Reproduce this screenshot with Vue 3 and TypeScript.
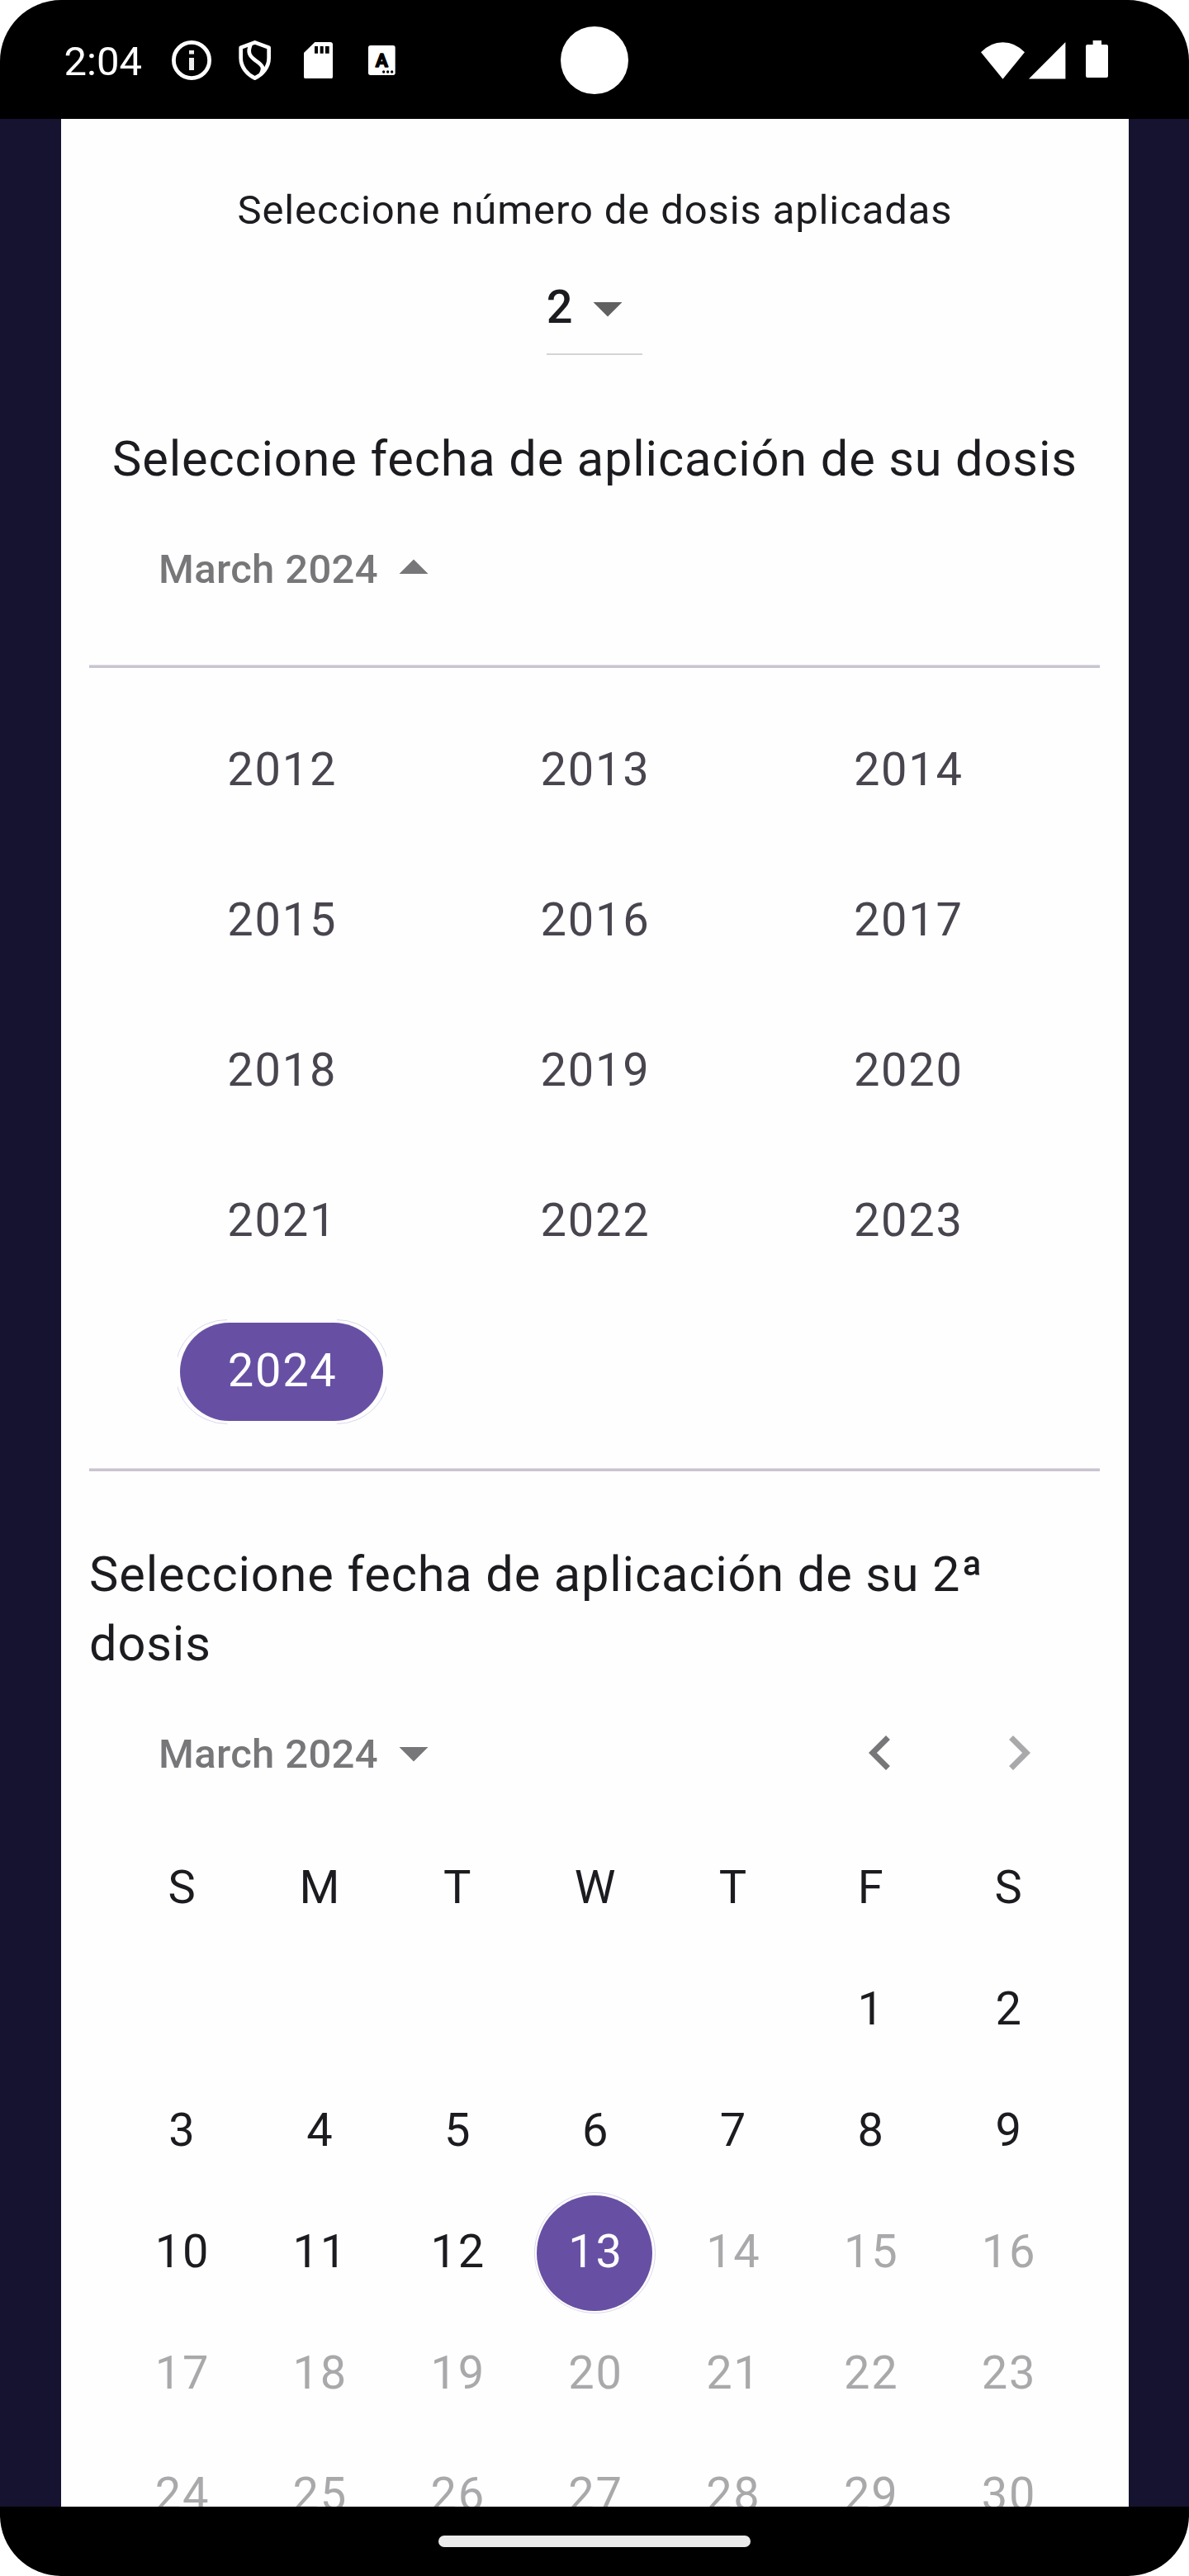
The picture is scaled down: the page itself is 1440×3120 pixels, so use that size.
<script setup lang="ts">
interface Day {
  label: string
  state: 'empty' | 'enabled' | 'selected' | 'disabled'
}

const years: number[] = Array.from({ length: 13 }, (_, i) => 2012 + i)
const selectedYear = 2024

const weekdays: string[] = ['S', 'M', 'T', 'W', 'T', 'F', 'S']

const firstWeekday = 5
const today = 13

const days: Day[] = [
  ...Array.from({ length: firstWeekday }, (): Day => ({ label: '', state: 'empty' })),
  ...Array.from({ length: 30 }, (_, i): Day => {
    const n = i + 1
    return {
      label: String(n),
      state: n === today ? 'selected' : n < today ? 'enabled' : 'disabled',
    }
  }),
]
</script>

<template>
  <div class="phone">
    <header class="status">
      <span class="clock">2:04</span>
      <svg class="info" viewBox="0 0 48 48">
        <circle cx="24" cy="24" r="21.6" fill="none" stroke="#fff" stroke-width="4.8" />
        <rect x="21" y="12" width="6" height="4.6" fill="#ececec" />
        <rect x="21" y="21" width="6" height="15" fill="#ececec" />
      </svg>
      <svg class="shield" viewBox="0 0 118 144" fill="none" stroke="#fff" stroke-width="14" stroke-linejoin="round">
        <path d="M59 7 L8 26 V64 C8 98 32 124 59 137 C86 124 110 98 110 64 V26 Z" />
        <path d="M44 14 C32 42 38 56 62 73 C88 90 94 100 80 124" />
      </svg>
      <svg class="sd" viewBox="0 0 105 134">
        <path d="M40 0 H96 Q105 0 105 9 V125 Q105 134 96 134 H9 Q0 134 0 125 V39 Z" fill="#fff" />
        <path d="M39 15h12v26H39zM59 15h12v26H59zM78 15h14v26H78z" fill="#000" />
      </svg>
      <svg class="abox" viewBox="0 0 98 108">
        <rect width="98" height="108" rx="8" fill="#fff" />
        <text x="49" y="77" text-anchor="middle" font-family="Roboto, sans-serif" font-weight="700" font-size="68" stroke="#000" stroke-width="4" stroke-linejoin="round">A</text>
        <circle cx="56" cy="96" r="5" />
        <circle cx="71" cy="96" r="5" />
        <circle cx="86" cy="96" r="5" />
      </svg>
      <span class="grow"></span>
      <svg class="wifi" viewBox="0 0 53 45">
        <path d="M26.5 44.7 L0 12.3 Q11.5 0.2 26.5 0.2 Q41.5 0.2 53 12.3 Z" fill="#fff" />
      </svg>
      <svg class="signal" viewBox="0 0 45 45">
        <path d="M0 44.6 L44.4 0 V44.6 Z" fill="#fff" />
      </svg>
      <svg class="battery" viewBox="0 0 27 45">
        <path d="M8.6 0 H19 V5 H25 Q27 5 27 7 V43 Q27 45 25 45 H2 Q0 45 0 43 V7 Q0 5 2 5 H8.6 Z" fill="#fff" />
      </svg>
      <span class="camera"></span>
    </header>

    <main class="body">
      <section class="sheet">
        <p class="label">Seleccione número de dosis aplicadas</p>
        <div class="select">
          <span class="value">2</span>
          <svg class="icon" viewBox="0 0 24 24"><path d="M7 10l5 5 5-5z" fill="#616161" /></svg>
        </div>

        <h2 class="title centered">Seleccione fecha de aplicación de su dosis</h2>
        <div class="month-bar">
          <span class="month">March 2024</span>
          <svg class="icon" viewBox="0 0 24 24"><path d="M7 14l5-5 5 5z" fill="#777679" /></svg>
        </div>
        <hr class="rule first" />
        <div class="years">
          <div v-for="y in years" :key="y" class="year">
            <span v-if="y === selectedYear" class="pill">
              {{ y }}
              <svg class="pill-ring" viewBox="0 0 253 127" fill="none" stroke="#dcd7ea" stroke-width="1">
                <path d="M60 .5 A63 63 0 0 0 60 126.5" />
                <path d="M193 .5 A63 63 0 0 1 193 126.5" />
              </svg>
            </span>
            <template v-else>{{ y }}</template>
          </div>
        </div>
        <hr class="rule second" />

        <h2 class="title">Seleccione fecha de aplicación de su 2ª dosis</h2>
        <div class="month-bar">
          <span class="month">March 2024</span>
          <svg class="icon" viewBox="0 0 24 24"><path d="M7 10l5 5 5-5z" fill="#777679" /></svg>
          <span class="grow"></span>
          <svg class="icon prev" viewBox="0 0 24 24">
            <path d="M15.41 7.41L14 6l-6 6 6 6 1.41-1.41L10.83 12z" fill="#777679" />
          </svg>
          <svg class="icon" viewBox="0 0 24 24">
            <path d="M10 6L8.59 7.41 13.17 12l-4.58 4.59L10 18l6-6z" fill="#a9a8aa" />
          </svg>
        </div>
        <div class="calendar">
          <div v-for="(w, i) in weekdays" :key="'w' + i" class="cell">{{ w }}</div>
          <div v-for="(d, i) in days" :key="i" class="cell" :class="d.state">
            <span v-if="d.state === 'selected'" class="dot">{{ d.label }}</span>
            <template v-else>{{ d.label }}</template>
          </div>
        </div>
      </section>
    </main>

    <footer class="nav"><span class="handle"></span></footer>
  </div>
</template>

<style>
body {
  background: #fff;
}
</style>

<style scoped>
.phone {
  box-sizing: border-box;
  width: 1440px;
  height: 3120px;
  display: flex;
  flex-direction: column;
  border-radius: 74px;
  overflow: hidden;
  background: #000;
  font-family: Roboto, sans-serif;
  color: #1c1b1f;
}

.phone svg {
  display: block;
  flex: none;
}

.grow {
  flex: 1;
}

/* Status bar */
.status {
  position: relative;
  flex: none;
  height: 144px;
  padding: 2px 98px 0 77.5px;
  box-sizing: border-box;
  display: flex;
  align-items: center;
}

.clock {
  width: 130.5px;
  padding-top: 3px;
  color: #fff;
  font-size: 49px;
  line-height: 58px;
}

.info {
  width: 48px;
  height: 48px;
}

.shield {
  width: 39.3px;
  height: 48px;
  margin-left: 33px;
}

.sd {
  width: 35px;
  height: 44.7px;
  margin-left: 39.7px;
}

.abox {
  width: 32.7px;
  height: 36px;
  margin-left: 43px;
}

.wifi {
  width: 53px;
  height: 45px;
  margin-right: 4.6px;
}

.signal {
  width: 45px;
  height: 45px;
  margin-right: 24.4px;
}

.battery {
  width: 27px;
  height: 45px;
  margin-top: -3px;
}

.camera {
  position: absolute;
  left: 679px;
  top: 32px;
  width: 82px;
  height: 82px;
  border-radius: 50%;
  background: #fff;
}

/* Scrollable content */
.body {
  height: 2892px;
  flex: none;
  overflow: hidden;
  background: #151330;
  display: flex;
  justify-content: center;
}

.sheet {
  box-sizing: border-box;
  width: 1293px;
  height: 2892px;
  padding: 76px 34.5px 0;
  background: #fefefe;
  display: flex;
  flex-direction: column;
  overflow: hidden;
}

.sheet > * {
  flex: none;
}

.label {
  margin: 0;
  text-align: center;
  font-size: 49px;
  line-height: 70px;
  letter-spacing: 0.875px;
  text-indent: 0.875px;
}

.select {
  box-sizing: border-box;
  align-self: center;
  height: 99px;
  margin-top: 41px;
  display: flex;
  border-bottom: 2px solid #d4d4d4;
}

.value {
  width: 32.5px;
  font-size: 56px;
  font-weight: 500;
  line-height: 82px;
}

.icon {
  width: 84px;
  height: 84px;
}

.title {
  margin: 83px 0 0;
  font-size: 59.5px;
  line-height: 84px;
  font-weight: 400;
  letter-spacing: 0.875px;
}

.title.centered {
  margin-top: 84px;
  text-align: center;
  text-indent: 0.875px;
  white-space: nowrap;
}

.month-bar {
  height: 84px;
  margin-top: 48px;
  padding: 0 56.5px 0 84px;
  display: flex;
  align-items: center;
}

.month {
  width: 266.5px;
  padding-top: 3px;
  white-space: nowrap;
  font-size: 49px;
  line-height: 82px;
  font-weight: 500;
  letter-spacing: 0.35px;
  color: #777679;
}

.prev {
  margin-right: 84px;
}

.rule {
  box-sizing: border-box;
  height: 4px;
  margin: 0;
  border: 0;
  border-top: 1px solid #e2dfe6;
  background: #cac4d0;
}

.rule.first {
  margin-top: 75px;
}

.rule.second {
  margin-top: 26px;
}

.years {
  margin: 33px 43px 0;
  display: grid;
  grid-template-columns: repeat(3, 1fr);
  grid-auto-rows: 182px;
}

.year {
  display: flex;
  align-items: center;
  justify-content: center;
  font-size: 56px;
  letter-spacing: 1.75px;
  color: #49454f;
  padding: 0 0 2px 2px;
}

.pill {
  position: relative;
  width: 246px;
  height: 119px;
  margin: 0 0 -2px -1px;
  padding: 0 0 2px 2px;
  box-sizing: border-box;
  display: flex;
  align-items: center;
  justify-content: center;
  border-radius: 60px;
  background: #6750a4;
  color: #fff;
}

.pill-ring {
  position: absolute;
  left: -3.5px;
  top: -4px;
  width: 253px;
  height: 127px;
}

.calendar {
  margin: 49px 28px 0;
  display: grid;
  grid-template-columns: repeat(7, 1fr);
  grid-auto-rows: 147px;
}

.cell {
  display: flex;
  align-items: center;
  justify-content: center;
  box-sizing: border-box;
  padding: 0 0 3px 3px;
  font-size: 56px;
  letter-spacing: 1.75px;
}

.cell.disabled {
  color: #a9a8aa;
}

.cell.selected {
  padding: 0 0 0 1px;
}

.dot {
  position: relative;
  box-sizing: border-box;
  width: 140px;
  height: 140px;
  padding: 0 0 3px 2px;
  display: flex;
  align-items: center;
  justify-content: center;
  border-radius: 50%;
  background: #6750a4;
  color: #fff;
}

.dot::after {
  content: '';
  position: absolute;
  inset: -3.5px;
  border: 1px solid #ddd8ea;
  border-radius: 50%;
}

/* Gesture navigation */
.nav {
  flex: 1;
  display: flex;
  justify-content: center;
  align-items: flex-start;
  padding-top: 35px;
}

.handle {
  width: 378px;
  height: 14px;
  border-radius: 7px;
  background: #ebebeb;
}
</style>
